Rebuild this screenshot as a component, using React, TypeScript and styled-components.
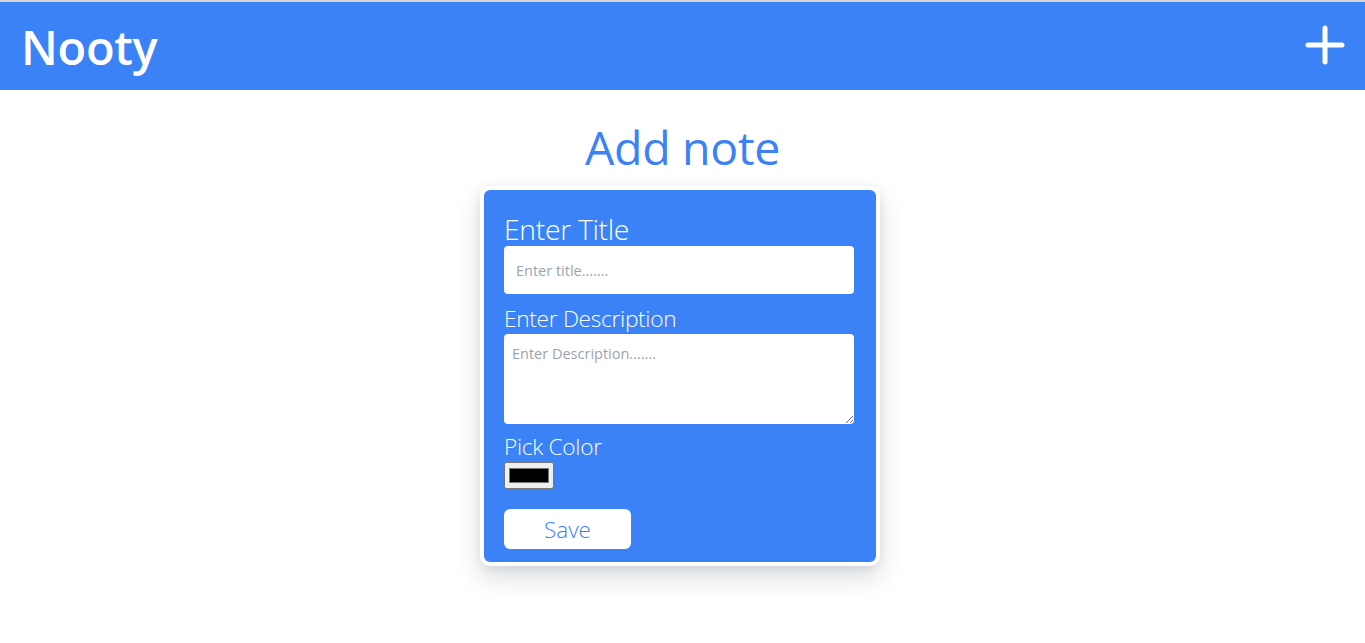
import React, { useState } from "react";
import styled, { createGlobalStyle } from "styled-components";

const Global = createGlobalStyle`
  html, body { margin: 0; padding: 0; background: #ffffff; }
  body {
    font-family: "Open Sans", "Noto Sans", sans-serif;
    border-top: 2px solid #d6d6d6;
  }
  * { box-sizing: border-box; }
`;

const Navbar = styled.header`
  height: 88px;
  background: #3b82f6;
  display: flex;
  align-items: center;
  justify-content: space-between;
  padding: 0 20px 0 21px;
`;

const Brand = styled.h1`
  margin: 0;
  color: #ffffff;
  font-size: 47px;
  font-weight: 600;
  letter-spacing: -0.3px;
  line-height: 1;
  padding-top: 2px;
`;

const AddButton = styled.button`
  background: none;
  border: none;
  padding: 0;
  width: 40px;
  height: 40px;
  display: flex;
  align-items: center;
  justify-content: center;
  cursor: pointer;
  margin-bottom: 2px;
`;

const Main = styled.main`
  display: flex;
  flex-direction: column;
  align-items: center;
  padding: 25px 0 80px;
`;

const Heading = styled.h2`
  margin: 0;
  color: #3b82f6;
  font-size: 46.5px;
  font-weight: 400;
  line-height: 64px;
  letter-spacing: -0.3px;
`;

const Card = styled.form`
  margin: 7px 5px 0 0;
  width: 400px;
  background: #3b82f6;
  border: 4px solid #ffffff;
  border-radius: 10px;
  box-shadow: 0 12px 24px rgba(30, 41, 59, 0.16), 0 2px 8px rgba(30, 41, 59, 0.08);
  padding: 23px 22px 13px 20px;
  display: flex;
  flex-direction: column;
`;

const Label = styled.label<{ $size: number; $lh: number }>`
  display: block;
  color: #ffffff;
  font-weight: 300;
  font-size: ${(p) => p.$size}px;
  line-height: ${(p) => p.$lh}px;
  letter-spacing: -0.3px;
`;

const TitleInput = styled.input`
  display: block;
  width: 350px;
  height: 48px;
  border: none;
  border-radius: 4px;
  background: #ffffff;
  padding: 0 12px;
  font-family: "Open Sans", "Noto Sans", sans-serif;
  font-size: 14.5px;
  outline: none;
  margin: 1px 0 12px;
  &::placeholder { color: #9ca3af; }
`;

const DescInput = styled.textarea`
  display: block;
  width: 350px;
  height: 90px;
  border: none;
  border-radius: 4px;
  background: #ffffff;
  padding: 10px 8px;
  font-family: "Open Sans", "Noto Sans", sans-serif;
  font-size: 14.5px;
  outline: none;
  margin: 2px 0 10px;
  resize: vertical;
  &::placeholder { color: #9ca3af; }
`;

const ColorInput = styled.input`
  display: block;
  width: 50px;
  height: 27px;
  margin: 2px 0 0 0;
`;

const SaveButton = styled.button`
  display: block;
  margin-top: 20px;
  width: 127px;
  height: 40px;
  border: none;
  border-radius: 6px;
  background: #ffffff;
  color: #3b82f6;
  font-family: "Open Sans", "Noto Sans", sans-serif;
  font-weight: 300;
  font-size: 22.5px;
  cursor: pointer;
`;

export default function App() {
  const [color, setColor] = useState("#000000");
  return (
    <>
      <Global />
      <Navbar>
        <Brand>Nooty</Brand>
        <AddButton aria-label="Add note">
          <svg width="40" height="40" viewBox="0 0 40 40">
            <path d="M20 3 V37 M3 20 H37" stroke="#ffffff" strokeWidth="5" strokeLinecap="round" fill="none" />
          </svg>
        </AddButton>
      </Navbar>
      <Main>
        <Heading>Add note</Heading>
        <Card onSubmit={(e) => e.preventDefault()}>
          <Label $size={28.3} $lh={32}>Enter Title</Label>
          <TitleInput placeholder="Enter title......." />
          <Label $size={22.7} $lh={26}>Enter Description</Label>
          <DescInput placeholder="Enter Description......." />
          <Label $size={22.7} $lh={26}>Pick Color</Label>
          <ColorInput type="color" value={color} onChange={(e) => setColor(e.target.value)} />
          <SaveButton type="submit">Save</SaveButton>
        </Card>
      </Main>
    </>
  );
}
